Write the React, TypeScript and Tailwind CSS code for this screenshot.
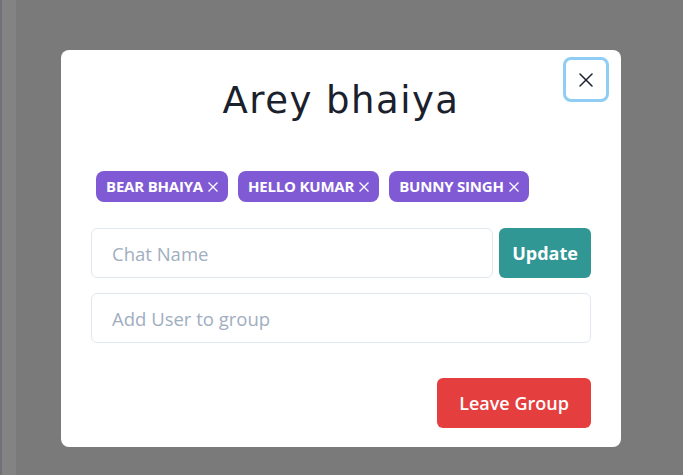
import { X } from 'lucide-react'

const users = ['BEAR BHAIYA', 'HELLO KUMAR', 'BUNNY SINGH']

function UserBadge({ name }: { name: string }) {
  return (
    <div className="flex h-[31px] items-center gap-[3px] rounded-lg bg-[#805ad5] pl-[10px] pr-[8px] text-[15px] font-bold tracking-[-0.2px] text-white">
      <span>{name}</span>
      <svg width="14" height="14" viewBox="0 0 14 14" className="mt-[1px]">
        <path d="M2.5 2.5 L11.5 11.5 M11.5 2.5 L2.5 11.5" stroke="white" strokeWidth="1.3" fill="none" />
      </svg>
    </div>
  )
}

export default function App() {
  return (
    <div
      className="flex h-[475px] w-[683px] overflow-hidden bg-[#7a7a7a]"
      style={{ fontFamily: '"Open Sans", "Noto Sans", sans-serif' }}
    >
      <div className="w-[16px] shrink-0 border-l-2 border-[#6f7378] bg-[#838383]" />
      <div className="flex-1 pl-[45px]">
        <div className="mt-[50px] h-[397px] w-[560px] rounded-lg bg-white">
          <div className="relative flex h-[110px] justify-center pt-[24px]">
            <h1
              className="text-[37px] leading-[54px] tracking-[1.5px] text-[#1a202c]"
              style={{ fontFamily: '"DejaVu Sans", sans-serif' }}
            >
              Arey bhaiya
            </h1>
            <button className="absolute right-[12px] top-[7px] flex h-[45px] w-[46px] items-center justify-center rounded-[8px] border-[3px] border-[#90cdf4] text-[#1a202c]">
              <X size={24} strokeWidth={1.5} />
            </button>
          </div>
          <div className="flex gap-[10px] pl-[35px] pt-[11px]">
            {users.map((u) => (
              <UserBadge key={u} name={u} />
            ))}
          </div>
          <div className="flex flex-col gap-[15px] px-[30px] pt-[26px]">
            <div className="flex gap-[6px]">
              <input
                placeholder="Chat Name"
                className="h-[50px] flex-1 rounded-md border border-[#e2e8f0] px-[20px] text-[18.5px] placeholder:text-[#a0aec0]"
              />
              <button className="h-[50px] w-[92px] rounded-md bg-[#319795] text-lg font-bold text-white">
                Update
              </button>
            </div>
            <input
              placeholder="Add User to group"
              className="h-[50px] rounded-md border border-[#e2e8f0] px-[20px] text-[18.5px] placeholder:text-[#a0aec0]"
            />
          </div>
          <div className="flex justify-end px-[30px] pt-[35px]">
            <button className="h-[50px] w-[154px] rounded-md bg-[#e53e3e] text-lg font-semibold text-white">
              Leave Group
            </button>
          </div>
        </div>
      </div>
    </div>
  )
}
